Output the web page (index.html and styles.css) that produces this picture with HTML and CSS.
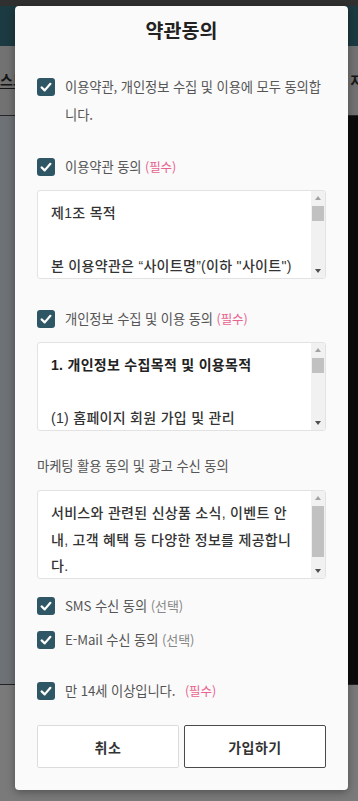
FILE: index.html
```html
<!DOCTYPE html>
<html lang="ko">
<head>
<meta charset="utf-8">
<title>약관동의</title>
<link rel="stylesheet" href="styles.css">
</head>
<body>
<div class="page">
  <div class="bg-strip"></div>
  <div class="bg-header"></div>
  <div class="bg-nav">
    <span class="nav-item active">스토어</span>
    <span class="nav-spacer"></span>
    <span class="nav-item last">지시</span>
  </div>
  <div class="bg-main">
    <div class="bg-left"></div>
    <div class="bg-photo"></div>
  </div>
  <div class="bg-foot"></div>
</div>

<div class="modal">
  <h1 class="title">약관동의</h1>

  <label class="row row-all">
    <span class="cb"><svg viewBox="0 0 18 18" width="18" height="18"><rect width="18" height="18" rx="3" fill="#2f5664"/><polyline points="4.6,9.4 7.7,12.4 13.4,5.8" fill="none" stroke="#fff" stroke-width="2.2" stroke-linecap="round" stroke-linejoin="round"/></svg></span>
    <span class="lbl">이용약관, 개인정보 수집 및 이용에 모두 동의합니다.</span>
  </label>

  <label class="row row-terms">
    <span class="cb"><svg viewBox="0 0 18 18" width="18" height="18"><rect width="18" height="18" rx="3" fill="#2f5664"/><polyline points="4.6,9.4 7.7,12.4 13.4,5.8" fill="none" stroke="#fff" stroke-width="2.2" stroke-linecap="round" stroke-linejoin="round"/></svg></span>
    <span class="lbl">이용약관 동의 <span class="req">(필수)</span></span>
  </label>

  <div class="box box-first">
    <div class="box-text">
      <p>제1조 목적</p>
      <p>&nbsp;</p>
      <p>본 이용약관은 “사이트명”(이하 "사이트")</p>
    </div>
    <div class="sb">
      <span class="sb-btn"><span class="arr-up"></span></span>
      <span class="sb-thumb small"></span>
      <span class="sb-fill"></span>
      <span class="sb-btn"><span class="arr-down"></span></span>
    </div>
  </div>

  <label class="row row-privacy">
    <span class="cb"><svg viewBox="0 0 18 18" width="18" height="18"><rect width="18" height="18" rx="3" fill="#2f5664"/><polyline points="4.6,9.4 7.7,12.4 13.4,5.8" fill="none" stroke="#fff" stroke-width="2.2" stroke-linecap="round" stroke-linejoin="round"/></svg></span>
    <span class="lbl">개인정보 수집 및 이용 동의 <span class="req">(필수)</span></span>
  </label>

  <div class="box box-second">
    <div class="box-text">
      <p class="strong">1. 개인정보 수집목적 및 이용목적</p>
      <p>&nbsp;</p>
      <p>(1) 홈페이지 회원 가입 및 관리</p>
    </div>
    <div class="sb">
      <span class="sb-btn"><span class="arr-up"></span></span>
      <span class="sb-thumb small"></span>
      <span class="sb-fill"></span>
      <span class="sb-btn"><span class="arr-down"></span></span>
    </div>
  </div>

  <div class="plain-label">마케팅 활용 동의 및 광고 수신 동의</div>

  <div class="box box-third">
    <div class="box-text">
      <p>서비스와 관련된 신상품 소식, 이벤트 안내, 고객 혜택 등 다양한 정보를 제공합니다.</p>
    </div>
    <div class="sb">
      <span class="sb-btn"><span class="arr-up"></span></span>
      <span class="sb-thumb large"></span>
      <span class="sb-fill"></span>
      <span class="sb-btn"><span class="arr-down"></span></span>
    </div>
  </div>

  <label class="row row-sms">
    <span class="cb"><svg viewBox="0 0 18 18" width="18" height="18"><rect width="18" height="18" rx="3" fill="#2f5664"/><polyline points="4.6,9.4 7.7,12.4 13.4,5.8" fill="none" stroke="#fff" stroke-width="2.2" stroke-linecap="round" stroke-linejoin="round"/></svg></span>
    <span class="lbl">SMS 수신 동의 <span class="opt">(선택)</span></span>
  </label>

  <label class="row row-mail">
    <span class="cb"><svg viewBox="0 0 18 18" width="18" height="18"><rect width="18" height="18" rx="3" fill="#2f5664"/><polyline points="4.6,9.4 7.7,12.4 13.4,5.8" fill="none" stroke="#fff" stroke-width="2.2" stroke-linecap="round" stroke-linejoin="round"/></svg></span>
    <span class="lbl">E-Mail 수신 동의 <span class="opt">(선택)</span></span>
  </label>

  <label class="row row-age">
    <span class="cb"><svg viewBox="0 0 18 18" width="18" height="18"><rect width="18" height="18" rx="3" fill="#2f5664"/><polyline points="4.6,9.4 7.7,12.4 13.4,5.8" fill="none" stroke="#fff" stroke-width="2.2" stroke-linecap="round" stroke-linejoin="round"/></svg></span>
    <span class="lbl">만 14세 이상입니다. <span class="req gap">(필수)</span></span>
  </label>

  <div class="buttons">
    <button class="btn btn-cancel" type="button">취소</button>
    <button class="btn btn-join" type="button">가입하기</button>
  </div>
</div>
</body>
</html>
```

FILE: styles.css
```css
* { box-sizing: border-box; }

html, body {
  margin: 0;
  padding: 0;
  height: 801px;
  overflow: hidden;
}

body {
  font-family: "Noto Sans CJK KR", "Noto Sans", sans-serif;
  background: #7a7a7a;
  position: relative;
}

/* dimmed page behind the modal */
.page {
  display: flex;
  flex-direction: column;
  height: 801px;
}
.bg-strip { height: 6px; background: #303030; }
.bg-header { height: 40px; background: #1c3a41; }
.bg-nav {
  height: 70px;
  background: #727272;
  border-bottom: 1px solid #262626;
  display: flex;
  align-items: center;
  overflow: hidden;
  padding-bottom: 2px;
}
.nav-item {
  font-size: 14px;
  font-weight: 700;
  color: #151515;
  white-space: nowrap;
  line-height: 18px;
}
.nav-item.active { border-bottom: 1px solid #151515; }
.nav-spacer { flex: 1; }
.nav-item.last { margin-right: -18px; }
.bg-main {
  height: 568px;
  display: flex;
}
.bg-left { flex: 1; background: #6e7175; }
.bg-photo {
  width: 20px;
  background: linear-gradient(90deg, #1c1c1c 0, #0d0d0d 40%, #0b0b0b 100%);
}
.bg-foot {
  flex: 1;
  border-top: 1px solid #222;
  background: #7a7a7a;
}

/* modal */
.modal {
  position: absolute;
  left: 15px;
  top: 6px;
  width: 333px;
  background: #fafafa;
  border-radius: 4px;
  box-shadow: 0 2px 8px rgba(0, 0, 0, 0.35);
  padding: 12px 22px 22px;
  display: flex;
  flex-direction: column;
}

.title {
  margin: 0;
  text-align: center;
  font-size: 19.5px;
  line-height: 24px;
  font-weight: 700;
  color: #222;
}

.row {
  display: flex;
  align-items: flex-start;
  gap: 10px;
  cursor: pointer;
}
.cb {
  flex: 0 0 18px;
  height: 18px;
  margin-top: 5px;
  display: block;
}
.cb svg { display: block; }
.lbl {
  flex: 1;
  font-size: 13.3px;
  letter-spacing: -0.1px;
  line-height: 28px;
  color: #555;
}
.req {
  color: #e8638f;
  font-size: 12.5px;
}
.req.gap { margin-left: 6px; }
.opt {
  color: #888;
  font-size: 13px;
}

.row-all { margin-top: 31px; }
.row-terms { margin-top: 24px; }
.row-privacy { margin-top: 26px; }
.row-sms { margin-top: 13px; }
.row-mail { margin-top: 6px; }
.row-age { margin-top: 23px; }

.plain-label {
  margin-top: 21px;
  font-size: 13.3px;
  letter-spacing: -0.1px;
  line-height: 28px;
  color: #555;
}

.box {
  height: 89px;
  background: #fff;
  border: 1px solid #e2e2e2;
  border-radius: 3px;
  display: flex;
  overflow: hidden;
}
.box-first, .box-second { margin-top: 9px; }
.box-third { margin-top: 10px; }

.box-text {
  flex: 1;
  overflow: hidden;
  padding: 9px 11px 0 13px;
  font-family: "Liberation Sans", "Noto Sans CJK KR", sans-serif;
  font-size: 14px;
  letter-spacing: 0.3px;
  line-height: 26.5px;
  font-weight: 500;
  color: #333;
}
.box-text p { margin: 0; }
.box-text .strong { font-weight: 700; color: #222; }

.sb {
  flex: 0 0 14px;
  background: #f1f1f1;
  display: flex;
  flex-direction: column;
  align-items: center;
}
.sb-btn {
  height: 14px;
  width: 14px;
  display: flex;
  align-items: center;
  justify-content: center;
}
.arr-up {
  width: 0;
  height: 0;
  border-left: 3.5px solid transparent;
  border-right: 3.5px solid transparent;
  border-bottom: 4px solid #a3a3a3;
}
.arr-down {
  width: 0;
  height: 0;
  border-left: 3.5px solid transparent;
  border-right: 3.5px solid transparent;
  border-top: 4px solid #505050;
}
.sb-thumb {
  width: 12px;
  margin-top: 1px;
  background: #c1c1c1;
}
.sb-thumb.small { height: 15px; }
.sb-thumb.large { height: 51px; }
.sb-fill { flex: 1; }

.buttons {
  margin-top: 20px;
  display: flex;
  gap: 5px;
}
.btn {
  flex: 1;
  height: 43px;
  background: #fff;
  font-family: inherit;
  font-size: 14px;
  font-weight: 700;
  color: #333;
  letter-spacing: 0.5px;
  border-radius: 2px;
  padding: 0;
  cursor: pointer;
}
.btn-cancel { border: 1px solid #dcdcdc; }
.btn-join { border: 1px solid #4a4a4a; }
```
